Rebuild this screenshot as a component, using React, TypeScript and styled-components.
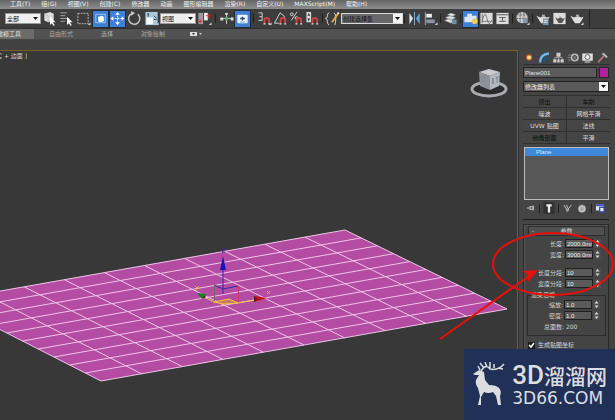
import React from "react";
import styled, { createGlobalStyle } from "styled-components";

const sans = `"DejaVu Sans", "Noto Sans CJK SC", sans-serif`;

const GlobalStyle = createGlobalStyle`
  * { box-sizing: border-box; }
  body { margin: 0; background: #383838; color: #d4d4d4; font: 6px/8px ${sans}; }
  button, input, select { font: inherit; color: inherit; margin: 0; padding: 0; border: 0; border-radius: 0; }
  svg { display: block; }
`;

const Page = styled.div`
  position: relative;
  display: flex;
  flex-direction: column;
  min-height: 100vh;
  overflow: hidden;
`;

const MenuBar = styled.nav`
  display: flex;
  gap: 11px;
  height: 9px;
  padding-left: 10px;
  overflow: hidden;
  background: linear-gradient(#666, #8c8c8c);
  color: #f4f4f4;
`;

const MenuItem = styled.button`
  height: 7px;
  line-height: 7px;
  background: none;
  white-space: nowrap;
`;

const Toolbar = styled.div`
  display: flex;
  align-items: center;
  height: 20px;
  padding-left: 5px;
  background: #3d3d3d;
  border-bottom: 1px solid #303030;
`;

const Group = styled.div<{ $tight?: boolean }>`
  display: flex;
  align-items: center;
  gap: ${(p) => (p.$tight ? 1 : 2)}px;
  flex: none;
  padding: 0 1px;
`;

const Separator = styled.span<{ $tight?: boolean }>`
  flex: none;
  width: 1px;
  height: 9px;
  margin: 0 ${(p) => (p.$tight ? 1 : 2)}px;
  background: #202020;
`;

const ToolbarEnd = styled.span`
  width: 1px;
  height: 19px;
  margin-left: 4px;
  background: #242424;
`;

const ToolButton = styled.button<{ $on?: boolean }>`
  flex: none;
  width: 15px;
  height: 16px;
  background: ${(p) => (p.$on ? "#3d80d6" : "transparent")};
  box-shadow: ${(p) => (p.$on ? "0 0 0 1px #242c38" : "none")};
`;

const SelectBox = styled.span<{ $w: number; $dark?: boolean }>`
  position: relative;
  flex: none;
  display: block;
  width: ${(p) => p.$w}px;
  height: 11px;
  border: 1px solid ${(p) => (p.$dark ? "#d8d8d8" : "#999")};
  background: ${(p) => (p.$dark ? "#686868" : "#eee")};
  color: #101010;

  select {
    display: block;
    width: 100%;
    height: 9px;
    padding-left: 1px;
    line-height: 9px;
    appearance: none;
    background: transparent;
  }
`;

const SelectArrow = styled.svg`
  position: absolute;
  right: 0;
  top: 0;
  background: #f4f4f4;
  pointer-events: none;
`;

const Ribbon = styled.div`
  display: flex;
  align-items: center;
  height: 11px;
  background: #525252;
  border-bottom: 1px solid #464646;
  color: #aaa;
`;

const RibbonTab = styled.button<{ $active?: boolean; $w: number }>`
  flex: none;
  width: ${(p) => p.$w}px;
  height: 10px;
  overflow: hidden;
  text-align: ${(p) => (p.$active ? "left" : "center")};
  text-indent: ${(p) => (p.$active ? -3 : 0)}px;
  white-space: nowrap;
  background: ${(p) => (p.$active ? "#6b6b6b" : "transparent")};
  color: ${(p) => (p.$active ? "#e4e4e4" : "inherit")};
`;

const RibbonBody = styled.div`
  height: 10px;
  background: #414141;
`;

const Workspace = styled.div`
  display: flex;
  flex: 1;
`;

const Viewport = styled.main`
  position: relative;
  flex: 1;
  min-width: 0;
  overflow: hidden;
  background: #383838;
  border: solid #756128;
  border-width: 1px 1px 0 0;
`;

const ViewLabel = styled.div`
  position: absolute;
  left: -4px;
  top: 1px;
  white-space: pre;
  color: #d4d4d4;
`;

const ViewCube = styled.svg`
  position: absolute;
  right: 8px;
  top: 16px;
`;

const Panel = styled.aside`
  flex: none;
  width: 97px;
  padding: 0 5px 0 4px;
  background: #444;
  border-left: 1px solid #333;
`;

const PanelTabs = styled.div`
  display: flex;
  justify-content: space-between;
  height: 15px;
  padding-right: 1px;
  border-bottom: 1px solid #303030;
`;

const PanelTab = styled.button`
  width: 13px;
  height: 14px;
  background: transparent;
`;

const NameRow = styled.div`
  display: flex;
  gap: 2px;
  margin: 2px 1px 3px 0;
`;

const NameInput = styled.input`
  flex: 1;
  min-width: 0;
  height: 11px;
  padding-left: 1px;
  background: #5c5c5c;
  border: 1px solid #252525;
  color: #e4e4e4;
  font-family: "Liberation Sans", sans-serif;
`;

const Swatch = styled.button`
  width: 10px;
  height: 11px;
  background: #b31f9c;
  border: 1px solid #302030;
`;

const ModifierSelect = styled(SelectBox)`
  width: auto;
  margin-right: 1px;
  border-color: #222;
  background: #595959;
  color: #eee;
`;

const ModifierGrid = styled.div`
  display: grid;
  grid-template-columns: 1fr 1fr;
  gap: 1px;
  margin: 3px 0;
  padding: 1px 0;
  background: #2f2f2f;
`;

const ModifierButton = styled.button<{ $off?: boolean }>`
  height: 11px;
  background: #454545;
  color: ${(p) => (p.$off ? "#0c0c0c" : "#dedede")};
`;

const Stack = styled.div`
  height: 53px;
  margin: 0 1px;
  border: 1px solid #bdbdbd;
  background: #585858;
`;

const StackItem = styled.button`
  display: block;
  width: 100%;
  height: 8px;
  padding-left: 11px;
  text-align: left;
  background: #3e88dc;
  color: #d8e8fa;
  font-family: "Liberation Sans", sans-serif;
`;

const StackTools = styled.div`
  display: flex;
  align-items: center;
  justify-content: space-between;
  height: 16px;
  margin: 0 3px 3px 1px;

  button { display: grid; place-items: center; }
`;

const Rollout = styled.section`
  margin: 0 1px 0 0;
  padding-top: 4px;
  border-top: 1px solid #1d1d1d;
`;

const RolloutBody = styled.div`
  padding: 1px 3px 4px 4px;
  border: 1px solid #292929;
  box-shadow: inset 1px 1px #555;
`;

const RolloutHeader = styled.button`
  display: grid;
  grid-template-columns: 8px 1fr 8px;
  align-items: center;
  width: 100%;
  height: 10px;
  margin-bottom: 2px;
  background: #505050;
  border: 1px solid #2e2e2e;
  text-align: center;
`;

const Field = styled.div`
  display: grid;
  grid-template-columns: 1fr 28px 7px;
  align-items: center;
  gap: 1px;
  height: 11px;
  margin-right: 4px;
  label { text-align: right; white-space: nowrap; }
`;

const FieldGap = styled.div`
  height: 7px;
`;

const NumberInput = styled.input`
  width: 28px;
  height: 9px;
  padding-left: 1px;
  background: #5a5a5a;
  border: 1px solid #202020;
  color: #f0f0f0;
  font-family: "Liberation Sans", sans-serif;
`;

const Spinner = styled.button`
  width: 7px;
  height: 9px;
  background: #4c4c4c;
`;

const FieldSet = styled.fieldset`
  margin: 2px -1px 4px;
  padding: 0 1px 1px 0;
  min-width: 0;
  border: 1px solid #2b2b2b;
  legend { margin-left: 3px; padding: 0; line-height: 8px; }
`;

const FaceCount = styled.div`
  height: 13px;
  padding-left: 16px;
  line-height: 12px;
`;

const CheckRow = styled.label`
  display: flex;
  align-items: center;
  gap: 3px;
  height: 10px;
  white-space: nowrap;
`;

const CheckBox = styled.input`
  width: 7px;
  height: 7px;
  appearance: none;
  background: #222;
  border: 1px solid #191919;
  &:not(:checked) + svg { visibility: hidden; }
`;

const TickSlot = styled.span`
  display: grid;
  > * { grid-area: 1 / 1; }
  svg { pointer-events: none; }
`;

const Annotation = styled.svg`
  position: absolute;
  right: 0;
  top: 225px;
  pointer-events: none;
`;

const Brand = styled.footer`
  position: absolute;
  right: 0;
  bottom: 0;
  display: flex;
  gap: 6px;
  height: 71px;
  padding: 13px 8px 0 8px;
  background: #213056;
  color: #dcdde0;
`;

const BrandText = styled.div`
  display: flex;
  flex-direction: column;
  gap: 1px;
  white-space: nowrap;
`;

const BrandTitle = styled.div`
  display: flex;
  align-items: center;
  height: 26px;
  font: 500 26px/26px Roboto, sans-serif;
  span { font: 500 21px/26px "Noto Sans CJK SC", sans-serif; }
`;

const BrandDomain = styled.div`
  font-size: 17px;
  line-height: 18px;
`;

const G = "#d8d8d8";
const corner = <path d="M15 15v-3l-3 3z" fill="#ccc" />;
const magnet = <path d="M7.5 14V10a2.5 2.5 0 0 1 5 0v4" fill="none" stroke="#c94444" strokeWidth="2" />;
const magnetTips = <path d="M6.5 13h2v1.5h-2zM11.5 13h2v1.5h-2z" fill="#ddd" />;
const cursor = <path d="M8 6l6 6-3 0 2 3-1 1-2-3-2 2z" fill="#fff" />;
const teapot = (c: string) => (
  <path d="M1 5l4 2q4-3 7 0l3-1-2 4-2 3H6l-2-3zM7 4h3v1H7z" fill={c} />
);

const art: Record<string, React.ReactNode> = {
  pick: <><path d="M2 3l6-2 4 2v7l-6 2-4-2z" fill="#ddd" /><path d="M2 3l4 2v7" fill="none" stroke="#bbb" />{cursor}</>,
  byName: <><path d="M1 2h7M1 5h5M1 8h7M1 11h5" stroke="#aaa" />{cursor}</>,
  region: <><rect x="1.5" y="2.5" width="11" height="11" fill="none" stroke="#bbb" strokeDasharray="2 1" />{corner}</>,
  window: <><rect x="2.5" y="3.5" width="10" height="9" fill="none" stroke="#9dc6f5" /><path d="M5 6l4-1 2 1v5l-4 1-2-1z" fill="#fff" /></>,
  move: <><path d="M7.5 2v12M1.5 8h12" stroke="#fff" strokeDasharray="2 1" /><path d="M7.5 1l2.500 3h-5zM7.5 15l2.500-3h-5zM0 8l3-2.500v5zM15 8l-3-2.500v5z" fill="#fff" /></>,
  rotate: <><path d="M11 3.5a6 6 0 1 1-6-1" fill="none" stroke="#ccc" strokeWidth="1.5" /><path d="M4 0l4 2-4 3z" fill="#ccc" /></>,
  scale: <><rect x="1" y="1" width="13" height="14" fill="#a9cbdc" /><rect x="2" y="7" width="7" height="7" fill="#f4f8fa" /><path d="M4 3v3M3 3h2M10 9h3M10 5l3 3" stroke="#27445a" />{corner}</>,
  pivot: <><path d="M1 2h5v12H1z" fill="#9a9a9f" /><path d="M7 2h4v8H7z" fill="#eee" /><path d="M1 11h4M3 9v4M9 5h5M12 3v5" stroke="#d33030" />{corner}</>,
  manipulate: <><path d="M7.5 2v12M1 8h13" stroke="#ccc" /><path d="M6 2h3v2H6zM12 7h3v3h-3zM1 7h3v3H1z" fill="#ddd" /><path d="M6 6h3v4H6z" fill="#46b257" /></>,
  keys: <><rect x="2" y="4" width="11" height="9" rx="1" fill="#f2f2f2" /><path d="M5 8h5M7.5 6v4" stroke="#244a78" strokeWidth="1.5" /><path d="M5 11h5v2H5z" fill="#aac6e8" /></>,
  snap: <><path d="M1 2h4v4H2M5 6v4H1" fill="none" stroke={G} />{magnet}{magnetTips}{corner}</>,
  angle: <><path d="M1 13L7 2q5 2 6 8M1 13h5" fill="none" stroke={G} />{magnet}{magnetTips}</>,
  percent: <><circle cx="2.5" cy="3.5" r="1.5" fill="none" stroke={G} /><circle cx="7.5" cy="7.5" r="1.5" fill="none" stroke={G} /><path d="M8 1L2 10" stroke={G} />{magnet}{magnetTips}</>,
  spinnerSnap: <><path d="M1 1h5v11H1z" fill={G} /><path d="M3.5 2l1.5 3H2zM3.5 11l1.5-3H2z" fill="#333" />{magnet}{magnetTips}</>,
  sets: <><path d="M4 2Q2 2 2 5T0 8q2 0 2 3t2 4M9 2q2 0 2 5t-1 8" fill="none" stroke={G} /><path d="M14 2L7 12" stroke="#e2ad45" strokeWidth="2" /><path d="M13 1l2 1-2 2z" fill="#fff" /></>,
  mirror: <><path d="M2 2l4 6-4 6z" fill="#ddd" /><path d="M13 2L9 8l4 6z" fill="#5aa8de" /><path d="M7.5 1v14" stroke="#7eaed0" /></>,
  align: <><path d="M2 1v14" stroke="#aaa" /><path d="M3 3h6v4H3z" fill="#eee" /><path d="M3 9h9v4H3z" fill="#8c92a4" />{corner}</>,
  layers: <><path d="M1 10l5-2 7 2-5 3zM2 7l5-2 6 2-5 3zM4 4l4-2 5 2-4 2z" fill="#e4e4e4" stroke="#777" strokeWidth=".5" /><path d="M9 9h5v5H9z" fill="#718ba8" /></>,
  ribbon: <><path d="M1 6h3V3h5v2h5v7H1z" fill="#dce5f2" /><circle cx="12" cy="11" r="3" fill="#efcd55" /></>,
  curve: <><rect x="1" y="2" width="13" height="12" fill="#ddd" /><path d="M3 3v10M2 11h11M3 10Q6-2 8 8t5 2" fill="none" stroke="#777" /></>,
  schematic: <><rect x="1" y="2" width="13" height="12" fill="#ddd" /><path d="M1 4h13M4 7h7M7.5 7v4M4 11h7" stroke="#555" /></>,
  material: <><circle cx="7" cy="7" r="6" fill="#c8c8c8" /><path d="M2 4h10M1 8h12M5 1v12M9 1v12" stroke="#666" strokeDasharray="2 1" /><path d="M8 8h5v5H8z" fill="#8698ad" />{corner}</>,
  renderSetup: <>{teapot("#ddd")}<path d="M8 8h6v7H8z" fill="#7890a8" /><path d="M9 10h4M9 12h4" stroke="#eee" /></>,
  frame: <><rect x="1" y="2" width="13" height="12" fill="#ddd" /><g transform="translate(2 3) scale(.75)">{teapot("#555")}</g></>,
  render: <>{teapot("#ddd")}{corner}</>,
  create: <><circle cx="7" cy="8" r="4" fill="#b85c20" /><circle cx="7" cy="8" r="2.5" fill="#ffdc90" /></>,
  modify: <><path d="M2 14Q2 4 13 3" fill="none" stroke="#6cb9ec" strokeWidth="3" /><path d="M8 14V9h6" fill="none" stroke="#1b567e" strokeWidth="2" /></>,
  hierarchy: <><path d="M5 2h5v5H5zM1 10h4v4H1zM6 10h3v4H6zM10 10h4v4h-4z" fill="#ccc" /><path d="M7.5 6v4M3 10V8h9v2" fill="none" stroke="#aaa" /></>,
  motion: <><circle cx="9" cy="8" r="5" fill="#bbb" /><circle cx="9" cy="8" r="2.5" fill="#777" stroke="#333" /><path d="M1 5h3M0 8h3M1 11h3" stroke="#999" /></>,
  display: <><path d="M1 3h13v9H1zM4 13h7v1H4z" fill="#ddd" /><circle cx="7.5" cy="7.5" r="3" fill="#eee" stroke="#555" /></>,
  utilities: <><path d="M2 14l8-9" stroke="#b07a80" strokeWidth="2" /><path d="M6 4l3-2 5 5-2 2-3-4z" fill="#bbb" /></>,
  pin: <path d="M1 8h5M6 5v6M6 6h5v4H6M11 4v8" fill="none" stroke="#ccc" strokeWidth="1.5" />,
  result: <><path d="M0 0h15v16H0z" fill="#333" /><path d="M4 3h7v3H9v8H6V6H4z" fill="#eee" /></>,
  unique: <path d="M1 3l5 9 7-9M5 3l4 9M5 13h3" fill="none" stroke="#c4c4c4" strokeWidth="1.5" />,
  trash: <><circle cx="7.5" cy="9" r="6" fill="#c4c4c4" /><path d="M5 5V2h5v3M5 8h5M5 11h5" fill="none" stroke="#666" /></>,
  configure: <><path d="M1 2h12v10H1z" fill="#dce2f2" /><path d="M1 2h12v3H1z" fill="#3c4dba" /><path d="M7 7h7v7H7z" fill="#eee" stroke="#334ba5" strokeWidth="2" /></>,
};

const Icon = ({ name, size = 15 }: { name: string; size?: number }) => (
  <svg width={size} height={size} viewBox="0 0 15 16" aria-hidden="true">{art[name]}</svg>
);

const Tools = ({ names, on = [], tight }: { names: string[]; on?: string[]; tight?: boolean }) => (
  <Group $tight={tight}>
    {names.map((n) => (
      <ToolButton key={n} $on={on.includes(n)} aria-label={n}><Icon name={n} /></ToolButton>
    ))}
  </Group>
);

const Arrow = () => (
  <SelectArrow width="9" height="9" viewBox="0 0 9 9" aria-hidden="true"><path d="M2 3h5L4.5 6z" fill="#111" /></SelectArrow>
);

const Dropdown = ({ label, value, width, dark }: { label: string; value: string; width: number; dark?: boolean }) => (
  <SelectBox $w={width} $dark={dark}>
    <select aria-label={label} defaultValue={value}><option>{value}</option></select>
    <Arrow />
  </SelectBox>
);

const NumberField = ({ id, label, value }: { id: string; label: string; value: string }) => (
  <Field>
    <label htmlFor={id}>{label}:</label>
    <NumberInput id={id} defaultValue={value} />
    <Spinner aria-label={`${label} ±`}>
      <svg width="7" height="9" viewBox="0 0 7 9"><path d="M1.5 3.5h4L3.5 1zM1.5 5.5h4L3.5 8z" fill="#ddd" /></svg>
    </Spinner>
  </Field>
);

type Point = [number, number];
const back: Point = [345, 230];
const right: Point = [507, 309];
const front: Point = [101, 381];
const left: Point = [-56, 301];
const between = (a: Point, b: Point, t: number): Point => [a[0] + (b[0] - a[0]) * t, a[1] + (b[1] - a[1]) * t];

const gridPath = Array.from({ length: 11 }, (_, i) => {
  const t = i / 10;
  return `M${between(back, right, t)}L${between(left, front, t)}M${between(back, left, t)}L${between(right, front, t)}`;
}).join("");

const Scene = () => (
  <svg width="517" height="369" viewBox="0 51 517 369" aria-label="Plane001">
    <path d="M345 230L507 309 101 381-56 301z" fill="#b34ca2" />
    <path d={gridPath} fill="none" stroke="#efc5e8" />
    <g fill="none">
      <path d="M223 294v-26M214 285l9 4 15-3" stroke="#3428b4" />
      <path d="M214.5 285v17" stroke="#68705c" />
      <path d="M238.5 286v17" stroke="#d83260" />
      <path d="M214 302l15-3 9 4-15 1zM204 297l10 5M238 303l17-3" fill="#c87965" stroke="#f0c840" />
    </g>
    <path d="M223 256l3 14h-6z" fill="#1414c0" />
    <path d="M267 298l-13-2v6z" fill="#c40d18" />
    <path d="M197 293l9 1-4 5z" fill="#168020" />
    <path d="M254 296l3 3-3 3zM206 294l-1 4-3 1z" fill="#402020" />
    <path d="M222 249h3l-3 3h3" fill="none" stroke="#3428b4" />
    <path d="M195 286l2 2 2-2M197 288l-1 3M267 291l3 3M270 291l-3 3" fill="none" stroke="#e8ae40" />
  </svg>
);

const menus = ["工具(T)", "组(G)", "视图(V)", "创建(C)", "修改器", "动画", "图形编辑器", "渲染(R)", "自定义(U)", "MAXScript(M)", "帮助(H)"];
const modifiers: [string, boolean][] = [["挤出", true], ["车削", true], ["噪波", false], ["网格平滑", false], ["UVW 贴图", false], ["法线", false], ["倒角剖面", true], ["平滑", false]];

export default function App() {
  return (
    <Page>
      <GlobalStyle />
      <MenuBar>{menus.map((m) => <MenuItem key={m}>{m}</MenuItem>)}</MenuBar>
      <Toolbar>
        <Dropdown label="选择过滤器" value="全部" width={36} />
        <Tools names={["pick", "byName", "region", "window", "move", "rotate", "scale"]} on={["window", "move"]} />
        <Dropdown label="参考坐标系" value="视图" width={36} />
        <Tools names={["pivot"]} />
        <Separator />
        <Tools tight names={["manipulate", "keys"]} on={["keys"]} />
        <Separator />
        <Tools tight names={["snap", "angle", "percent", "spinnerSnap"]} />
        <Separator $tight />
        <Tools names={["sets"]} />
        <Dropdown label="命名选择集" value="创建选择集" width={62} dark />
        <Separator $tight />
        <Tools tight names={["mirror", "align"]} />
        <Separator $tight />
        <Tools names={["layers"]} />
        <Separator $tight />
        <Tools tight names={["ribbon", "curve", "schematic"]} on={["ribbon"]} />
        <Separator $tight />
        <Tools names={["material"]} />
        <Separator $tight />
        <Tools names={["renderSetup", "frame", "render"]} />
        <ToolbarEnd />
      </Toolbar>
      <Ribbon>
        <RibbonTab $w={34} $active>建模工具</RibbonTab>
        <RibbonTab $w={54}>自由形式</RibbonTab>
        <RibbonTab $w={38}>选择</RibbonTab>
        <RibbonTab $w={54}>对象绘制</RibbonTab>
        <RibbonTab $w={30} aria-label="最小化">
          <svg width="30" height="10" viewBox="0 0 30 10"><path d="M10 3h7v4h-7z" fill="#ddd" /><path d="M12 4h3l-1.5 2z" fill="#333" /><path d="M19 4h3l-1.5 2z" fill="#ccc" /></svg>
        </RibbonTab>
      </Ribbon>
      <RibbonBody />
      <Workspace>
        <Viewport>
          <Scene />
          <ViewLabel>实 + 边面 ]</ViewLabel>
          <ViewCube width="40" height="34" viewBox="0 0 40 34" aria-label="ViewCube">
            <ellipse cx="20" cy="22" rx="17" ry="7" fill="#2b2b2b" stroke="#a9abae" strokeWidth="3" />
            <path d="M10 5l10-3 11 3-10 4z" fill="#c8cad0" />
            <path d="M10 5l11 4v14l-10-4z" fill="#8e929a" />
            <path d="M21 9l10-4-1 14-9 4z" fill="#b4b7be" />
            <path d="M13 9v6M13 9l3 1v6M23 11l2 6M25 11l-2 6M27 9l1 3 2-3M28 12v4" fill="none" stroke="#858992" />
          </ViewCube>
        </Viewport>
        <Panel>
          <PanelTabs>
            {["create", "modify", "hierarchy", "motion", "display", "utilities"].map((n) => (
              <PanelTab key={n} aria-label={n}><Icon name={n} size={13} /></PanelTab>
            ))}
          </PanelTabs>
          <NameRow>
            <NameInput aria-label="名称" defaultValue="Plane001" />
            <Swatch aria-label="颜色" />
          </NameRow>
          <ModifierSelect $w={86}>
            <select aria-label="修改器列表"><option>修改器列表</option></select>
            <Arrow />
          </ModifierSelect>
          <ModifierGrid>
            {modifiers.map(([name, off]) => <ModifierButton key={name} $off={off}>{name}</ModifierButton>)}
          </ModifierGrid>
          <Stack><StackItem>Plane</StackItem></Stack>
          <StackTools>
            <PanelTab aria-label="锁定堆栈"><Icon name="pin" size={10} /></PanelTab>
            <Separator $tight />
            <PanelTab aria-label="显示最终结果"><Icon name="result" size={12} /></PanelTab>
            <Separator $tight />
            <PanelTab aria-label="使唯一"><Icon name="unique" size={10} /></PanelTab>
            <PanelTab aria-label="移除修改器"><Icon name="trash" size={10} /></PanelTab>
            <Separator $tight />
            <PanelTab aria-label="配置修改器集"><Icon name="configure" size={10} /></PanelTab>
          </StackTools>
          <Rollout>
            <RolloutBody>
              <RolloutHeader><span>-</span><span>参数</span></RolloutHeader>
              <NumberField id="length" label="长度" value="2000.0mm" />
              <NumberField id="width" label="宽度" value="3000.0mm" />
              <FieldGap />
              <NumberField id="length-segs" label="长度分段" value="10" />
              <NumberField id="width-segs" label="宽度分段" value="10" />
              <FieldSet>
                <legend>渲染倍增</legend>
                <NumberField id="scale" label="缩放" value="1.0" />
                <NumberField id="density" label="密度" value="1.0" />
                <FaceCount>总面数: 200</FaceCount>
              </FieldSet>
              <CheckRow>
                <TickSlot>
                  <CheckBox type="checkbox" defaultChecked />
                  <svg width="7" height="7" viewBox="0 0 7 7" aria-hidden="true"><path d="M1 3l2 2 3-4" fill="none" stroke="#fff" strokeWidth="1.5" /></svg>
                </TickSlot>
                生成贴图坐标
              </CheckRow>
            </RolloutBody>
          </Rollout>
        </Panel>
      </Workspace>
      <Annotation width="180" height="120" viewBox="435 225 180 120" aria-hidden="true">
        <g fill="none" stroke="#e90f0a" strokeWidth="2">
          <ellipse cx="553" cy="264" rx="60" ry="31" />
          <path d="M440 339L532 274" />
        </g>
        <path d="M538 270l-16 1 5 3 1 8z" fill="#e90f0a" />
      </Annotation>
      <Brand>
        <svg width="34" height="46" viewBox="0 0 34 46" aria-hidden="true">
          <path d="M1 12l6-4 5 2 1 8 4 5q7 0 10 3 3 3 1 8l1 9h-3l-2-9-3-4q-5 2-9 0l-3 5 0 8H6l2-9-2-8q-3-4-2-8l3-5-4 0z" fill="#dcdde0" />
          <path d="M9 9Q14 1 18 7q8 2 14-5M12 6L8 1M15 5l-2-5M18 6l0-6M22 6l0-4M26 6l5 1M8 8L6 4" fill="none" stroke="#dcdde0" strokeWidth="1.5" />
        </svg>
        <BrandText>
          <BrandTitle>3D<span>溜溜网</span></BrandTitle>
          <BrandDomain>3D66.COM</BrandDomain>
        </BrandText>
      </Brand>
    </Page>
  );
}
